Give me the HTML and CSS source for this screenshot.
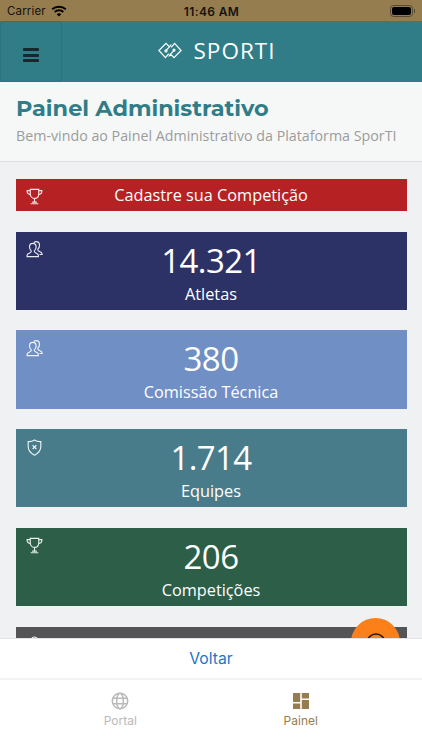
FILE: index.html
```
<!DOCTYPE html>
<html lang="pt-BR">
<head>
    <meta charset="UTF-8">
    <meta name="viewport" content="width=device-width, initial-scale=1.0">
    <title>SporTI - Painel Administrativo</title>
    <link rel="stylesheet" href="styles.css">
</head>
<body>

<!-- shared icons -->
<svg class="sprite" width="0" height="0">
    <symbol id="trophy" viewBox="0 0 18 18">
        <path d="M4.5 1.5h9v4.2c0 3-1.8 5.3-4.500 5.300S4.500 8.700 4.500 5.700zM4.500 2.800H1.200c0 3 1.300 4.300 3.700 4.300M13.500 2.800h3.300c0 3-1.300 4.300-3.700 4.300M9 11v4M6.500 15h5M5 16.700h8"/>
    </symbol>
    <symbol id="users" viewBox="0 0 18 18">
        <path d="M5.500 11.500V10.400C4.300 9.400 3.700 7.800 3.700 6.200c0-2.300 1.400-3.700 3.500-3.700s3.500 1.400 3.500 3.700c0 1.600-.6 3.200-1.800 4.200v1.100c0 1.300 4.200 1.300 4.200 3.800v1.300H1.100v-1.300c0-2.500 4.400-2.500 4.400-3.800z"/>
        <path d="M8.300 1.500c.7-.5 1.500-.8 2.400-.8 2.200 0 3.600 1.600 3.600 3.900 0 1.700-.6 3-1.700 4v1.100c0 1.300 4.400 1.500 4.400 3.800v.8h-2.700"/>
    </symbol>
    <symbol id="shield" viewBox="0 0 18 18">
        <path d="M9 1c1.700 1.300 4 1.800 6.700 1.700v5.100c0 4.400-3 7.600-6.700 9.300-3.700-1.700-6.700-4.900-6.700-9.300V2.700C5 2.800 7.300 2.300 9 1z"/>
        <path d="M7 6.600l4 4M11 6.600l-4 4"/>
    </symbol>
</svg>

<div class="app">
    <div class="status-bar">
        <div class="carrier">
            Carrier
            <svg class="wifi" viewBox="0 0 16 12">
                <path d="M1.200 4.300a10 10 0 0 1 13.600 0M3.700 7a6.300 6.300 0 0 1 8.600 0"/>
                <path class="dot" d="M8 11.500L5.700 9.200a3.400 3.400 0 0 1 4.600 0z"/>
            </svg>
        </div>
        <div class="clock">11:46 AM</div>
        <div class="battery"><span></span></div>
    </div>

    <div class="navbar">
        <button class="menu-button" aria-label="Menu">
            <span></span><span></span><span></span>
        </button>
        <div class="brand">
            <svg class="logo" viewBox="0 0 24 17">
                <path d="M10.800 11.600L7.400 15.600.9 8.500 8 1.300l3.500 3.500M13.200 5.400l3.400-4 6.500 7.100-7.100 7.200-3.500-3.500M7.800 8.700l3.700-3.900 1.700-2.300M16.200 8.300l-3.700 3.900-1.700 2.300"/>
                <circle cx="8" cy="8.900" r="1"/>
                <circle cx="16" cy="8.100" r="1"/>
            </svg>
            <span>SPORTI</span>
        </div>
    </div>

    <div class="page-header">
        <h1>Painel Administrativo</h1>
        <p>Bem-vindo ao Painel Administrativo da Plataforma SporTI</p>
    </div>

    <div class="cards">
        <div class="card card-action">
            <svg class="card-icon"><use href="#trophy"/></svg>
            <div class="card-label">Cadastre sua Competição</div>
        </div>
        <div class="card navy">
            <svg class="card-icon"><use href="#users"/></svg>
            <div class="card-number">14.321</div>
            <div class="card-label">Atletas</div>
        </div>
        <div class="card blue">
            <svg class="card-icon"><use href="#users"/></svg>
            <div class="card-number">380</div>
            <div class="card-label">Comissão Técnica</div>
        </div>
        <div class="card teal">
            <svg class="card-icon"><use href="#shield"/></svg>
            <div class="card-number">1.714</div>
            <div class="card-label">Equipes</div>
        </div>
        <div class="card green">
            <svg class="card-icon"><use href="#trophy"/></svg>
            <div class="card-number">206</div>
            <div class="card-label">Competições</div>
        </div>
        <div class="card gray">
            <svg class="card-icon" viewBox="0 0 18 18"><circle cx="9" cy="4" r="3"/></svg>
        </div>
        <div class="fab">
            <svg viewBox="0 0 24 24"><circle cx="12" cy="12" r="9"/></svg>
        </div>
    </div>

    <div class="back-bar">Voltar</div>

    <div class="tabs">
        <div class="tab">
            <svg class="globe" viewBox="0 0 18 18">
                <circle cx="9" cy="9" r="7.700"/>
                <ellipse cx="9" cy="9" rx="3.400" ry="7.700"/>
                <path d="M1.900 6.300h14.200M1.900 11.700h14.200"/>
            </svg>
            <span>Portal</span>
        </div>
        <div class="tab active">
            <svg class="dashboard" viewBox="0 0 18 18">
                <path d="M1 1h7.200v9H1zM9.800 1H17v5.500H9.800zM1 11.500h7.200V17H1zM9.800 8H17v9H9.800z"/>
            </svg>
            <span>Painel</span>
        </div>
    </div>
</div>

</body>
</html>
```
FILE: styles.css
```
* {
    box-sizing: border-box;
}

body {
    margin: 0;
    font-family: "Open Sans", sans-serif;
}

.sprite {
    position: absolute;
}

.app {
    display: flex;
    flex-direction: column;
    height: 750px;
    overflow: hidden;
    background-color: #f0f1f3;
}

.status-bar {
    display: grid;
    grid-template-columns: 1fr auto 1fr;
    align-items: center;
    height: 21px;
    flex-shrink: 0;
    padding: 1px 6px 0 7px;
    background-color: #967d4f;
    color: #15120c;
    font-family: Inter, sans-serif;
    font-size: 11.5px;
}

.carrier {
    display: flex;
    align-items: center;
    gap: 5px;
    letter-spacing: 0.15px;
}

.wifi {
    width: 16px;
    height: 12px;
    fill: none;
    stroke: #000;
    stroke-width: 2;
}

.wifi .dot {
    fill: #000;
    stroke: none;
}

.clock {
    font-size: 12px;
    font-weight: 600;
    letter-spacing: 0.35px;
}

.battery {
    position: relative;
    justify-self: end;
    width: 23px;
    height: 12px;
    margin-right: 3px;
    padding: 1px;
    border: 1px solid #574a31;
    border-radius: 3.5px;
}

.battery span {
    display: block;
    height: 8px;
    border-radius: 2px;
    background-color: #000;
}

.battery::after {
    content: "";
    position: absolute;
    top: 3px;
    right: -3px;
    width: 1px;
    height: 4px;
    background-color: #574a31;
}

.navbar {
    display: grid;
    grid-template-columns: 62px 1fr 62px;
    height: 61px;
    flex-shrink: 0;
    background-color: #307d88;
}

.menu-button {
    display: flex;
    flex-direction: column;
    align-items: center;
    justify-content: center;
    gap: 2.5px;
    padding: 7px 0 0;
    border: 1px solid #2b737e;
    border-radius: 3px;
    background: none;
}

.menu-button span {
    width: 16px;
    height: 3px;
    border-radius: 1px;
    background-color: #17272d;
}

.brand {
    display: flex;
    align-items: center;
    justify-content: center;
    gap: 12px;
    padding: 0 0 2px 11px;
    color: #fff;
    font-size: 22.5px;
    letter-spacing: 1px;
}

.logo {
    width: 24px;
    height: 17px;
    fill: none;
    stroke: #fff;
    stroke-width: 1.2;
}

.page-header {
    height: 80px;
    flex-shrink: 0;
    padding: 12px 16px 0;
    border-bottom: 1px solid #dcdfe5;
    background-color: #f6f8f8;
}

.page-header h1 {
    margin: 0;
    color: #307d88;
    font-family: Montserrat, Inter, sans-serif;
    font-size: 22.4px;
    font-weight: 700;
    line-height: 28px;
    white-space: nowrap;
}

.page-header p {
    margin: 3px 0 0;
    color: #9c9c9c;
    font-size: 14.25px;
    line-height: 22px;
    white-space: nowrap;
}

.cards {
    position: relative;
    display: flex;
    flex: 1;
    flex-direction: column;
    gap: 20.5px;
    min-height: 0;
    padding: 16.5px 15.5px 0;
    overflow: hidden;
}

.card {
    position: relative;
    height: 78.3px;
    flex-shrink: 0;
    padding-top: 8px;
    color: #fff;
    text-align: center;
}

.card-action {
    height: 32.5px;
    padding-top: 4px;
    background-color: #b62224;
}

.navy {
    background-color: #2c3266;
}

.blue {
    background-color: #7090c5;
}

.teal {
    background-color: #487c8b;
}

.green {
    background-color: #2d5e48;
}

.gray {
    background-color: #545456;
}

.card-icon {
    position: absolute;
    top: 9.5px;
    left: 10px;
    width: 17px;
    height: 17px;
    fill: none;
    stroke: #fff;
    stroke-opacity: 0.9;
    stroke-width: 1.2;
}

.card-number {
    font-size: 33px;
    line-height: 42px;
    letter-spacing: -0.6px;
}

.card-label {
    font-size: 16.3px;
    line-height: 24px;
}

.fab {
    position: absolute;
    top: 456px;
    right: 22px;
    display: flex;
    align-items: center;
    justify-content: center;
    width: 49px;
    height: 49px;
    border-radius: 50%;
    background-color: #fb8019;
}

.fab svg {
    width: 24px;
    height: 24px;
    fill: none;
    stroke: #2d1a0c;
    stroke-width: 1.5;
}

.back-bar {
    height: 42px;
    flex-shrink: 0;
    border-top: 1px solid #e3e3e4;
    border-bottom: 2px solid #f3f3f4;
    background-color: #fff;
    color: #1877c9;
    font-family: Inter, sans-serif;
    font-size: 15.7px;
    line-height: 39px;
    text-align: center;
}

.tabs {
    display: flex;
    height: 70px;
    flex-shrink: 0;
    padding: 0 31px 0 30px;
    background-color: #fff;
}

.tab {
    display: flex;
    flex: 1;
    flex-direction: column;
    align-items: center;
    gap: 3px;
    padding-top: 12px;
    color: #b9b9b9;
    font-family: Inter, sans-serif;
    font-size: 12px;
    line-height: 16px;
}

.tab svg {
    width: 18px;
    height: 18px;
}

.tab.active {
    color: #967d4f;
}

.globe {
    fill: none;
    stroke: currentColor;
    stroke-width: 1.5;
}

.dashboard {
    fill: currentColor;
}
```
